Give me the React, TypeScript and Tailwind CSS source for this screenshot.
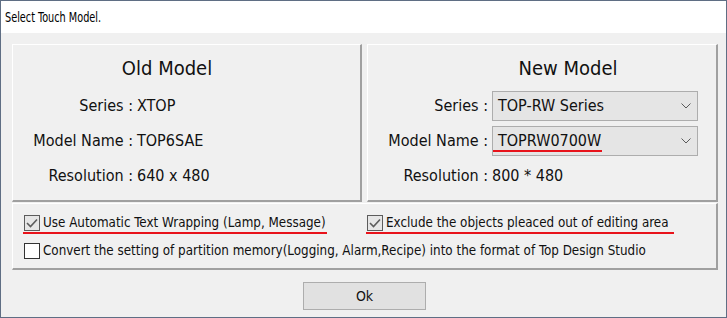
import React from "react";

function Chevron() {
  return (
    <svg width="10" height="6" viewBox="0 0 10 6" className="shrink-0">
      <path d="M0.5 0.5 L5 5 L9.5 0.5" fill="none" stroke="#5a5a5a" strokeWidth="1" />
    </svg>
  );
}

function Check({ checked }: { checked: boolean }) {
  return (
    <div
      className={
        "w-[16px] h-[16px] shrink-0 border flex items-center justify-center " +
        (checked ? "border-[#5c5c5c] bg-[#e6e6e6]" : "border-[#333333] bg-white")
      }
    >
      {checked && (
        <svg width="12" height="10" viewBox="0 0 12 10">
          <path d="M1 5 L4.5 8.5 L11 1.5" fill="none" stroke="#5c5c5c" strokeWidth="1.6" />
        </svg>
      )}
    </div>
  );
}

function Row({ label, children }: { label: string; children: React.ReactNode }) {
  return (
    <div className="h-[35px] grid grid-cols-[120px_1fr] gap-x-[4px] items-center">
      <div className="text-right whitespace-nowrap">{label}</div>
      <div className="whitespace-nowrap">{children}</div>
    </div>
  );
}

function Combo({ children }: { children: React.ReactNode }) {
  return (
    <div className="w-[206px] h-[30px] border border-[#adadad] bg-[#e5e5e5] flex items-center justify-between pl-[5px] pr-[6px]">
      <div className="whitespace-nowrap">{children}</div>
      <Chevron />
    </div>
  );
}

const panel =
  "border-t border-l border-t-white border-l-white border-r-2 border-b-2 border-r-[#a0a0a0] border-b-[#a0a0a0]";

export default function App() {
  return (
    <div className="w-[727px] h-[318px] bg-[#f0f0f0] border border-[#5f6e84] flex flex-col text-[16px] text-[#111] font-['DejaVu_Sans_Condensed','DejaVu_Sans',sans-serif]">
      <div className="h-[32px] bg-white flex items-center pl-[4px] text-black">
        <span className="inline-block text-[13.5px] scale-x-[0.8] origin-left whitespace-nowrap">Select Touch Model.</span>
      </div>
      <div className="flex-1 flex flex-col pt-[11px] pl-[11px] pr-[6px]">
        <div className="flex gap-[5px] h-[158px]">
          <div className={"w-[350px] " + panel}>
            <div className="ml-[54px] w-[200px] h-[28px] mt-[9px] flex items-center justify-center text-[20px]">
              Old Model
            </div>
            <div className="mt-[6px]">
              <Row label="Series :">XTOP</Row>
              <Row label="Model Name :">TOP6SAE</Row>
              <Row label="Resolution :">640 x 480</Row>
            </div>
          </div>
          <div className={"w-[351px] " + panel}>
            <div className="ml-[100px] w-[200px] h-[28px] mt-[9px] flex items-center justify-center text-[20px]">
              New Model
            </div>
            <div className="mt-[6px]">
              <Row label="Series :">
                <Combo>TOP-RW Series</Combo>
              </Row>
              <Row label="Model Name :">
                <Combo>
                  <span className="-ml-[5px] pl-[5px] border-b-2 border-[#e8131b] pr-[1px]">TOPRW0700W</span>
                </Combo>
              </Row>
              <Row label="Resolution :">800 * 480</Row>
            </div>
          </div>
        </div>
        <div className={"mt-[1px] w-[706px] h-[67px] pl-[11px] pt-[11px] text-[13.3px] leading-[16px] " + panel}>
          <div className="flex h-[18px] items-start">
            <div className="w-[343px]">
              <div className="inline-flex items-center gap-[3px] border-b-2 border-[#e8131b] -ml-[1px] pl-[1px] pb-[1px] pr-[1px]">
                <Check checked />
                <span className="whitespace-nowrap">Use Automatic Text Wrapping (Lamp, Message)</span>
              </div>
            </div>
            <div className="inline-flex items-center gap-[3px] border-b-2 border-[#e8131b] -ml-[1px] pl-[1px] pb-[1px] pr-[5px]">
              <Check checked />
              <span className="whitespace-nowrap">Exclude the objects pleaced out of editing area</span>
            </div>
          </div>
          <div className="flex items-center gap-[3px] mt-[10px]">
            <Check checked={false} />
            <span className="whitespace-nowrap">
              Convert the setting of partition memory(Logging, Alarm,Recipe) into the format of Top Design Studio
            </span>
          </div>
        </div>
        <div className="flex justify-start pl-[291px] mt-[12px]">
          <button className="w-[123px] h-[28px] bg-[#e1e1e1] border border-[#adadad] text-[14px] text-[#111] font-['DejaVu_Sans_Condensed','DejaVu_Sans',sans-serif]">
            Ok
          </button>
        </div>
      </div>
    </div>
  );
}
